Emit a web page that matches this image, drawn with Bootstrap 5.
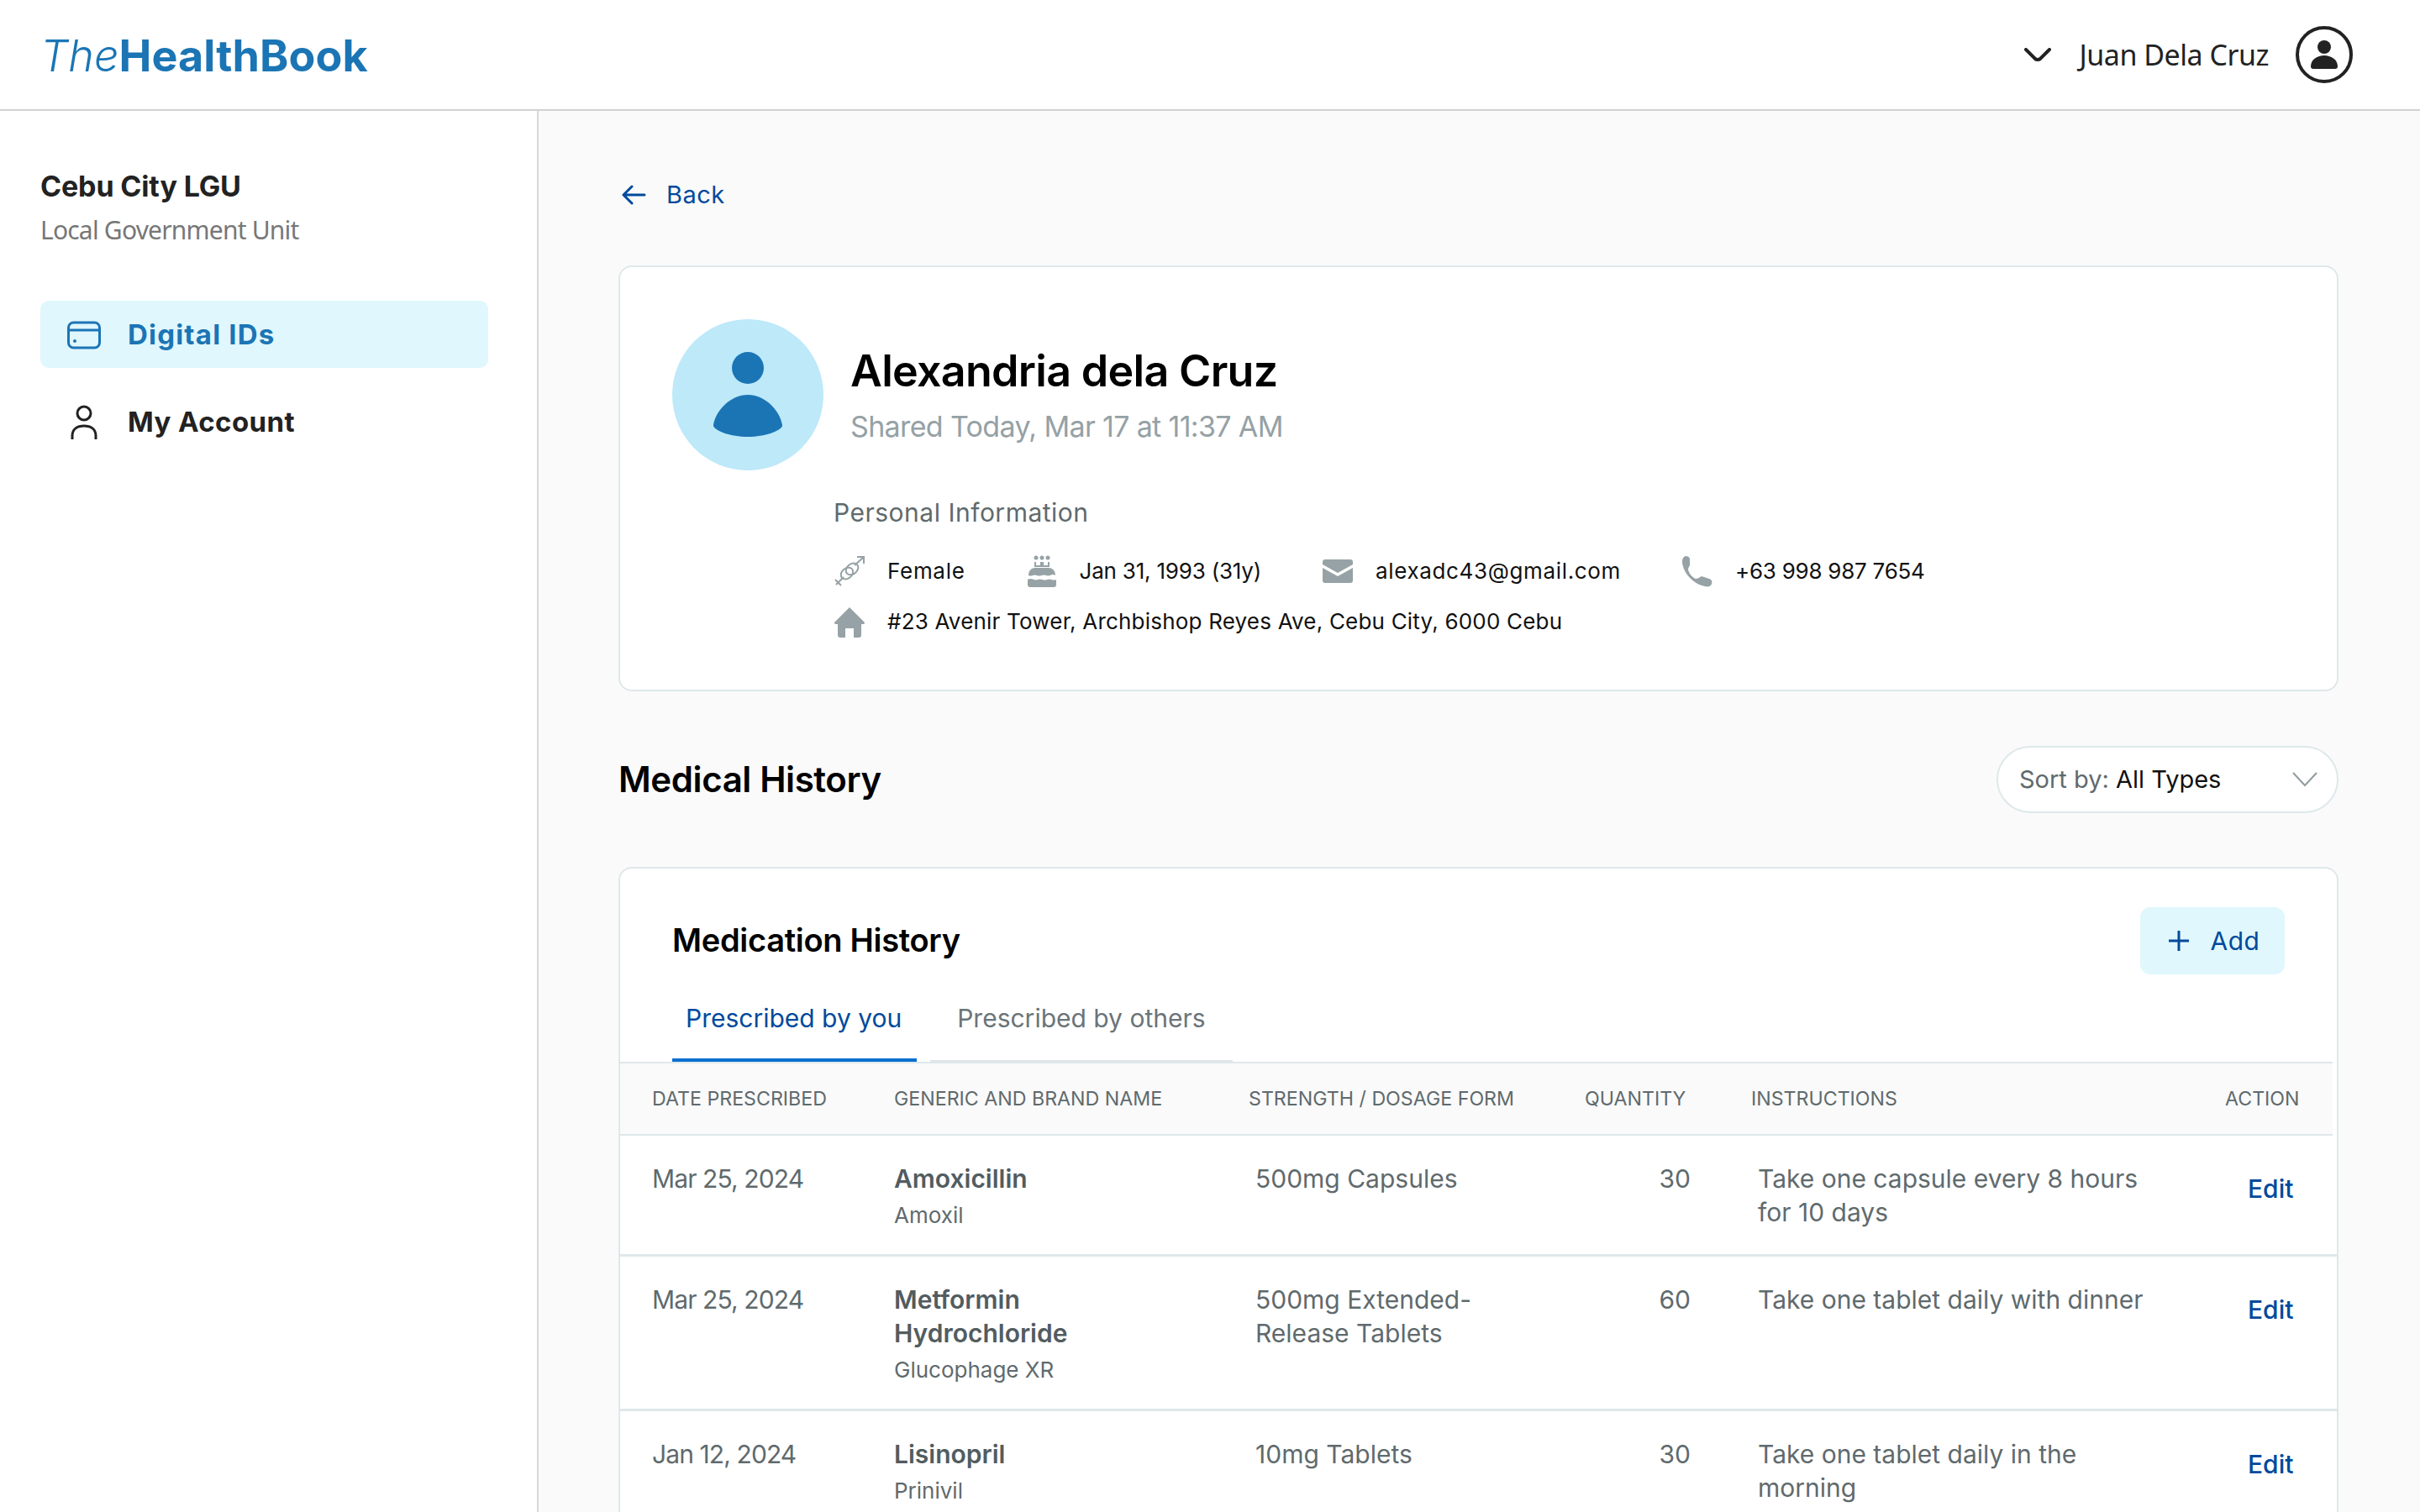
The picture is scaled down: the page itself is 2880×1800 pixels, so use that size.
<!DOCTYPE html>
<html lang="en">
<head>
  <meta charset="UTF-8" />
  <meta name="viewport" content="width=device-width, initial-scale=1.0"/>
  <title>TheHealthBook</title>
  <link href="https://cdn.jsdelivr.net/npm/bootstrap@5.3.3/dist/css/bootstrap.min.css" rel="stylesheet" />
  <style>
    body { background: #fafafa; font-family: "Inter", "Liberation Sans", sans-serif; height: 100vh; overflow: hidden; color: #5f6a6d; }
    .top-bar { height: 132px; padding: 0 80px 0 48px; background: #fff; border-bottom: 2px solid #d2d2d2; }
    .brand-logo { font-size: 52px; line-height: 1; color: #1b75b5; padding: 0; margin: 4px 0 0; letter-spacing: .1px; font-weight: 700; }
    .brand-logo i { font-weight: 300; }
    .user-name { font-family: "Noto Sans", sans-serif; font-size: 34px; color: #222; margin: 0 32px 0 34px; letter-spacing: -.5px; }
    .app-body { height: calc(100vh - 132px); }
    .side-bar { width: 641px; flex: none; background: #fff; border-right: 2px solid #d8d8d8; padding: 68px 58px 0 48px; }
    .org-name { font-size: 34px; line-height: 44px; font-weight: 700; color: #222; margin: 0; letter-spacing: -.15px; }
    .org-type { font-family: "Noto Sans", sans-serif; font-size: 30px; line-height: 40px; color: #777; margin: 10px 0 0; letter-spacing: -.8px; }
    .side-nav { margin-top: 64px; gap: 24px; }
    .side-nav .nav-link { height: 80px; padding: 2px 0 0 32px; display: flex; align-items: center; gap: 32px; font-size: 33px; font-weight: 700; color: #222; border-radius: 10px; letter-spacing: .4px; }
    .side-nav .nav-link.active { background: #e0f7fd; color: #1b75b5; letter-spacing: 1.2px; }
    .side-nav svg { width: 40px; height: 42px; flex: none; }
    .main-pane { flex: 1; min-width: 0; padding: 78px 97px 0 95px; }
    .back-link { display: inline-flex; align-items: center; gap: 24px; color: #004a9c; font-size: 29px; line-height: 44px; text-decoration: none; margin-left: 3px; letter-spacing: .5px; }
    .panel { border: 2px solid #dfe8ea; border-radius: 16px; background: #fff; }
    .profile-panel { margin-top: 62px; height: 507px; padding: 62px 62px 0; }
    .avatar-svg { width: 180px; height: 180px; flex: none; }
    .person-name { font-size: 52px; line-height: 64px; font-weight: 600; color: #000; margin: 0; letter-spacing: -.7px; }
    .shared-at { font-size: 34px; line-height: 46px; color: #95a1a5; margin: 11px 0 0; letter-spacing: -.65px; }
    .info-block { margin: 30px 0 0 192px; }
    .info-title { font-size: 30px; line-height: 40px; color: #5f6a6d; margin: 0 0 31px; letter-spacing: .5px; }
    .info-row { color: #111; font-size: 26px; line-height: 36px; letter-spacing: .2px; margin-bottom: 22px; }
    .info-item { display: flex; align-items: center; gap: 26px; }
    .info-item svg { width: 38px; height: 38px; flex: none; }
    .info-gap { gap: 72px; }
    .info-sex { letter-spacing: .7px; }
    .info-born { letter-spacing: -.2px; }
    .info-mail { letter-spacing: .65px; }
    .info-phone { letter-spacing: -.25px; }
    .section-head { margin-top: 65px; height: 80px; }
    .section-title { font-size: 42px; font-weight: 600; color: #000; margin: 0; letter-spacing: -.4px; }
    .sort-pill { width: 407px; height: 80px; border: 2px solid #dfe8ea; border-radius: 40px; background: #fff; padding: 0 23px 0 25px; font-size: 29px; color: #5f6a6d; }
    .sort-pill b { font-weight: 400; color: #111; }
    .history-panel { margin-top: 64px; height: 900px; }
    .history-top { padding: 46px 62px 0; }
    .history-title { font-size: 38px; font-weight: 600; color: #000; margin: 0; letter-spacing: -.3px; }
    .add-btn { width: 172px; height: 80px; background: #e0f7fd; border: 0; border-radius: 12px; color: #004a9c; font-size: 30px; display: flex; align-items: center; justify-content: center; gap: 26px; letter-spacing: .5px; padding: 0 0 0 4px; }
    .rx-tabs { border: 0; margin-top: 12px; gap: 16px; }
    .rx-tabs .nav-link { height: 92px; border: 0; border-radius: 0; padding: 0 32px; margin: 0; background: none; font-size: 30px; line-height: 80px; color: #6b7478; border-bottom: 2px solid #dfe5e8; }
    .rx-tabs .nav-link.active { color: #004a9c; border-bottom: 4px solid #0a6fd0; padding: 0 18px 0 16px; }
    .rx-head { table-layout: fixed; width: 2038px; margin: 0; border-top: 2px solid #dfe8ea; }
    .rx-head th { height: 86px; background: #fafafa; font-size: 23.2px; font-weight: 400; color: #5f6a6d; border-bottom: 2px solid #dfe8ea; padding: 0 0 0 38px; vertical-align: middle; }
    .rx-body { table-layout: fixed; width: 100%; margin: 0; }
    .rx-body td { font-size: 30px; line-height: 40px; padding: 31px 0 26px 38px; color: #5f6a6d; border-bottom: 3px solid #dfe8ea; vertical-align: top; }
    .rx-body td.date-cell { letter-spacing: -.9px; }
    .rx-body td.name-cell { padding-right: 60px; }
    .rx-body td.qty-cell { text-align: right; padding-right: 42px; }
    .rx-body td.note-cell { padding-right: 65px; }
    .drug-name { font-weight: 600; color: #525c5f; }
    .drug-brand { font-size: 26px; margin-top: 4px; }
    .edit-link { display: block; color: #004a9c; text-decoration: none; margin-top: 12px; font-weight: 500; }
  </style>
</head>
<body>

  <nav class="navbar top-bar flex-nowrap justify-content-between">
    <a class="navbar-brand brand-logo" href="#"><i>The</i>HealthBook</a>
    <div class="d-flex align-items-center">
      <svg width="32" height="16" viewBox="0 0 32 16" fill="none"><path d="M2 2 L13 13 Q16 15 19 13 L30 2" stroke="#222" stroke-width="4" stroke-linecap="round"/></svg>
      <span class="user-name">Juan Dela Cruz</span>
      <svg width="68" height="68" viewBox="0 0 68 68"><circle cx="34" cy="34" r="32" fill="none" stroke="#222" stroke-width="4"/><circle cx="34" cy="25" r="8" fill="#222"/><path d="M18 48 C18 40 26 35 34 35 C42 35 50 40 50 48 C50 50 49 51 47 51 H21 C19 51 18 50 18 48Z" fill="#222"/></svg>
    </div>
  </nav>

  <div class="d-flex app-body">
    <aside class="side-bar">
      <p class="org-name">Cebu City LGU</p>
      <p class="org-type">Local Government Unit</p>
      <ul class="nav flex-column side-nav">
        <li class="nav-item">
          <a class="nav-link active" href="#">
            <svg viewBox="0 0 40 42" fill="none" stroke="#1b75b5" stroke-width="3"><rect x="1.5" y="6" width="37" height="30" rx="6"/><path d="M2 15 H38"/><circle cx="9" cy="28" r="2" fill="#1b75b5" stroke="none"/></svg>
            Digital IDs
          </a>
        </li>
        <li class="nav-item">
          <a class="nav-link" href="#">
            <svg viewBox="0 0 40 42" fill="none" stroke="#222" stroke-width="3"><circle cx="20" cy="10" r="8"/><path d="M6 41 V37 C6 29 12 25 20 25 C28 25 34 29 34 37 V41"/></svg>
            My Account
          </a>
        </li>
      </ul>
    </aside>

    <main class="main-pane">
      <a class="back-link" href="#">
        <svg width="30" height="26" viewBox="0 0 30 26" fill="none" stroke="#004a9c" stroke-width="3" stroke-linecap="round" stroke-linejoin="round"><path d="M13 3 L3 13 L13 23 M3 13 H28"/></svg>
        Back
      </a>

      <section class="panel profile-panel">
        <div class="d-flex align-items-center gap-4">
          <svg class="avatar-svg" viewBox="0 0 180 180"><circle cx="90" cy="90" r="90" fill="#bde9f9"/><circle cx="90" cy="58" r="19" fill="#1b75b5"/><path d="M49 126 C52 108 70 90 90 90 C110 90 128 108 131 126 C132 131 114 140 90 140 C66 140 48 131 49 126Z" fill="#1b75b5"/></svg>
          <div class="ms-2">
            <h1 class="person-name">Alexandria dela Cruz</h1>
            <p class="shared-at">Shared Today, Mar 17 at 11:37 AM</p>
          </div>
        </div>
        <div class="info-block">
          <p class="info-title">Personal Information</p>
          <div class="d-flex info-row info-gap">
            <div class="info-item">
              <svg viewBox="0 0 38 38" fill="none" stroke="#96a2a6" stroke-width="2"><g transform="rotate(-40 19 19)"><ellipse cx="15" cy="19" rx="8" ry="6"/><ellipse cx="23" cy="19" rx="8" ry="6"/></g><path d="M25 12 L36 2 M28 2 H36 V10 M12 26 L3 35 M2 29 L9 36"/></svg>
              <span class="info-sex">Female</span>
            </div>
            <div class="info-item">
              <svg viewBox="0 0 38 38" fill="#96a2a6"><circle cx="12" cy="3" r="2.5"/><circle cx="19" cy="3" r="2.5"/><circle cx="26" cy="3" r="2.5"/><path d="M10 8 H12 V12 H17 V8 H21 V12 H26 V8 H28 V14 H10Z"/><path d="M3 24 C3 18 7 15 11 15 H27 C31 15 35 18 35 24 C31 21 28 26 24 24 C20 22 17 26 13 24 C9 22 7 26 3 24Z"/><path d="M2 29 C7 26 10 31 14 29 C18 27 21 31 25 29 C29 27 32 31 36 29 V35 C36 37 35 38 33 38 H5 C3 38 2 37 2 35Z"/></svg>
              <span class="info-born">Jan 31, 1993 (31y)</span>
            </div>
            <div class="info-item">
              <svg viewBox="0 0 38 38" fill="#96a2a6"><path d="M4 5 H34 C36 5 37 6 37 8 V11 L19 21 L1 11 V8 C1 6 2 5 4 5Z"/><path d="M1 15 L19 25 L37 15 V30 C37 32 36 33 34 33 H4 C2 33 1 32 1 30Z"/></svg>
              <span class="info-mail">alexadc43@gmail.com</span>
            </div>
            <div class="info-item">
              <svg viewBox="0 0 38 38" fill="#96a2a6"><path d="M3 2 C5 0 9 1 10 4 L10 12 C9 14 8 15 8 17 C9 22 13 26 17 28 C19 28 21 27 24 25 L33 28 C36 29 37 31 36 34 C35 37 32 38 28 37 C14 34 3 22 1 9 C1 6 1 4 3 2Z"/></svg>
              <span class="info-phone">+63 998 987 7654</span>
            </div>
          </div>
          <div class="info-item info-row">
            <svg viewBox="0 0 38 38" fill="#96a2a6"><path d="M19 2 L37 20 C37 22 36 22 34 22 H33 V35 C33 37 32 38 30 38 H24 V27 H14 V38 H8 C6 38 5 37 5 35 V22 H4 C2 22 1 22 1 20Z"/></svg>
            <span>#23 Avenir Tower, Archbishop Reyes Ave, Cebu City, 6000 Cebu</span>
          </div>
        </div>
      </section>

      <div class="d-flex align-items-center justify-content-between section-head">
        <h2 class="section-title">Medical History</h2>
        <div class="d-flex align-items-center justify-content-between sort-pill">
          <span>Sort by: <b>All Types</b></span>
          <svg width="30" height="18" viewBox="0 0 30 18" fill="none" stroke="#8f9ba0" stroke-width="2"><path d="M1 1 L15 16 L29 1"/></svg>
        </div>
      </div>

      <section class="panel history-panel overflow-hidden">
        <div class="history-top">
          <div class="d-flex align-items-center justify-content-between">
            <h3 class="history-title">Medication History</h3>
            <button class="btn add-btn">
              <svg width="24" height="24" viewBox="0 0 24 24" stroke="#004a9c" stroke-width="3"><path d="M12 0 V24 M0 12 H24"/></svg>
              Add
            </button>
          </div>
          <ul class="nav nav-tabs rx-tabs">
            <li class="nav-item"><a class="nav-link active" href="#">Prescribed by you</a></li>
            <li class="nav-item"><a class="nav-link" href="#">Prescribed by others</a></li>
          </ul>
        </div>

        <table class="table rx-head">
          <colgroup><col style="width:288px"><col style="width:422px"><col style="width:400px"><col style="width:198px"><col style="width:564px"><col></colgroup>
          <thead>
            <tr>
              <th>DATE PRESCRIBED</th>
              <th>GENERIC AND BRAND NAME</th>
              <th>STRENGTH / DOSAGE FORM</th>
              <th>QUANTITY</th>
              <th>INSTRUCTIONS</th>
              <th>ACTION</th>
            </tr>
          </thead>
        </table>
        <table class="table rx-body">
          <colgroup><col style="width:288px"><col style="width:430px"><col style="width:400px"><col style="width:198px"><col style="width:583px"><col></colgroup>
          <tbody>
            <tr>
              <td class="date-cell">Mar 25, 2024</td>
              <td class="name-cell"><div class="drug-name">Amoxicillin</div><div class="drug-brand">Amoxil</div></td>
              <td>500mg Capsules</td>
              <td class="qty-cell">30</td>
              <td class="note-cell">Take one capsule every 8 hours for 10 days</td>
              <td><a class="edit-link" href="#">Edit</a></td>
            </tr>
            <tr>
              <td class="date-cell">Mar 25, 2024</td>
              <td class="name-cell"><div class="drug-name">Metformin Hydrochloride</div><div class="drug-brand">Glucophage XR</div></td>
              <td>500mg Extended-<br>Release Tablets</td>
              <td class="qty-cell">60</td>
              <td class="note-cell">Take one tablet daily with dinner</td>
              <td><a class="edit-link" href="#">Edit</a></td>
            </tr>
            <tr>
              <td class="date-cell">Jan 12, 2024</td>
              <td class="name-cell"><div class="drug-name">Lisinopril</div><div class="drug-brand">Prinivil</div></td>
              <td>10mg Tablets</td>
              <td class="qty-cell">30</td>
              <td class="note-cell">Take one tablet daily in the morning</td>
              <td><a class="edit-link" href="#">Edit</a></td>
            </tr>
          </tbody>
        </table>
      </section>
    </main>
  </div>

  <script src="https://cdn.jsdelivr.net/npm/bootstrap@5.3.3/dist/js/bootstrap.bundle.min.js"></script>
</body>
</html>
